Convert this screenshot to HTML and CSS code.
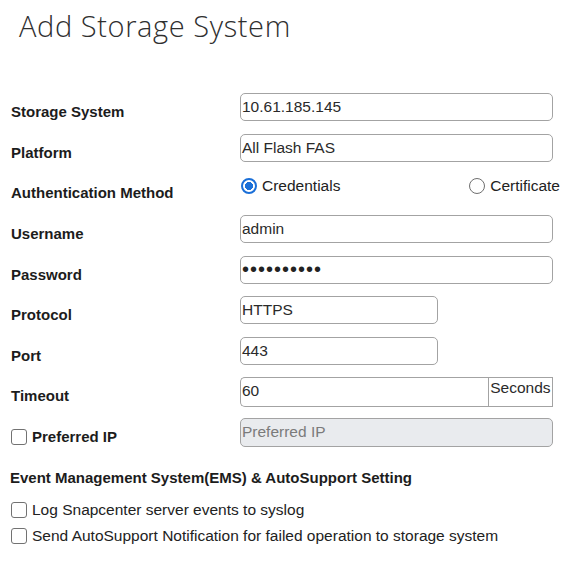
FILE: index.html
```html
<!DOCTYPE html>
<html>
<head>
<meta charset="utf-8">
<link rel="stylesheet" href="styles.css">
</head>
<body>
<h1 class="title">Add Storage System</h1>
<div class="form">
  <div class="lbl">Storage System</div>
  <div class="field"><div class="input">10.61.185.145</div></div>

  <div class="lbl">Platform</div>
  <div class="field"><div class="input">All Flash FAS</div></div>

  <div class="lbl">Authentication Method</div>
  <div class="field radios">
    <span class="radio-opt"><span class="radio on"></span>Credentials</span>
    <span class="radio-opt"><span class="radio"></span>Certificate</span>
  </div>

  <div class="lbl">Username</div>
  <div class="field"><div class="input">admin</div></div>

  <div class="lbl">Password</div>
  <div class="field"><div class="input pw">••••••••••</div></div>

  <div class="lbl">Protocol</div>
  <div class="field"><div class="input short">HTTPS</div></div>

  <div class="lbl">Port</div>
  <div class="field"><div class="input short">443</div></div>

  <div class="lbl">Timeout</div>
  <div class="field group"><div class="input grow">60</div><div class="addon">Seconds</div></div>

  <div class="lbl check-lbl"><span class="box"></span>Preferred IP</div>
  <div class="field"><div class="input disabled">Preferred IP</div></div>
</div>
<div class="ems">
  <div class="ems-head">Event Management System(EMS) &amp; AutoSupport Setting</div>
  <div class="ems-opt"><span class="box"></span>Log Snapcenter server events to syslog</div>
  <div class="ems-opt second"><span class="box"></span>Send AutoSupport Notification for failed operation to storage system</div>
</div>
</body>
</html>
```

FILE: styles.css
```css
html, body {
  margin: 0;
  padding: 0;
  background: #ffffff;
}
body {
  font-family: "Liberation Sans", Arial, sans-serif;
  color: #1c1c1c;
  width: 582px;
  height: 562px;
  overflow: hidden;
}
.title {
  font-family: "Open Sans", "Liberation Sans", sans-serif;
  font-weight: 300;
  font-size: 29px;
  line-height: 36px;
  color: #2f2f2f;
  margin: 8px 0 0 19px;
  letter-spacing: 0.6px;
}
.form {
  display: grid;
  grid-template-columns: 240px 313px;
  grid-auto-rows: 28px;
  row-gap: 12.625px;
  margin-top: 49px;
}
.lbl {
  font-weight: bold;
  font-size: 15px;
  line-height: 18px;
  padding: 10px 0 0 11px;
  white-space: nowrap;
  color: #1c1c1c;
}
.field {
  display: flex;
  align-items: stretch;
}
.input {
  box-sizing: border-box;
  width: 313px;
  height: 28px;
  border: 1.5px solid #a3a3a3;
  border-radius: 5px;
  font-size: 15.5px;
  line-height: 25px;
  padding-left: 1px;
  color: #2a2a2a;
  background: #fff;
}
.input.short {
  width: 198px;
}
.input.pw {
  font-size: 20px;
  letter-spacing: 1px;
  color: #222;
  line-height: 25px;
}
.group .grow {
  width: 249px;
  border-radius: 5px 0 0 5px;
  border-right: none;
  height: 30px;
}
.addon {
  box-sizing: border-box;
  width: 65px;
  height: 30px;
  border: 1.5px solid #a3a3a3;
  font-size: 15.5px;
  line-height: 20px;
  padding-left: 1px;
  color: #2a2a2a;
  white-space: nowrap;
}
.input.disabled {
  background: #e9ebee;
  color: #7b7b7b;
  height: 29px;
}
.radios {
  justify-content: space-between;
  align-items: flex-start;
  padding-top: 3px;
  width: 320px;
  font-size: 15.5px;
  line-height: 17px;
  color: #222;
}
.radio-opt {
  display: flex;
  align-items: center;
  gap: 5px;
}
.radio {
  box-sizing: border-box;
  width: 16px;
  height: 16px;
  border-radius: 50%;
  border: 1.5px solid #6f6f6f;
  background: #fff;
  margin-left: 1px;
}
.radio.on {
  border: 2px solid #1a6fd8;
  background: radial-gradient(circle, #1a6fd8 0 3.8px, #fff 4.3px);
}
.check-lbl {
  display: flex;
  align-items: center;
  gap: 5px;
  padding-top: 10px;
  padding-left: 11px;
}
.box {
  display: inline-block;
  box-sizing: border-box;
  width: 16px;
  height: 16px;
  border: 1.5px solid #727272;
  border-radius: 3px;
  background: #fff;
  flex: none;
}
.ems {
  margin-top: 23px;
  padding-left: 10px;
}
.ems-head {
  font-weight: bold;
  font-size: 15px;
  line-height: 18px;
  color: #1c1c1c;
}
.ems-opt {
  display: flex;
  align-items: center;
  gap: 5px;
  font-size: 15.5px;
  line-height: 18px;
  margin-top: 14px;
  padding-left: 1px;
  color: #222;
}
.ems-opt.second {
  margin-top: 8px;
}
```
